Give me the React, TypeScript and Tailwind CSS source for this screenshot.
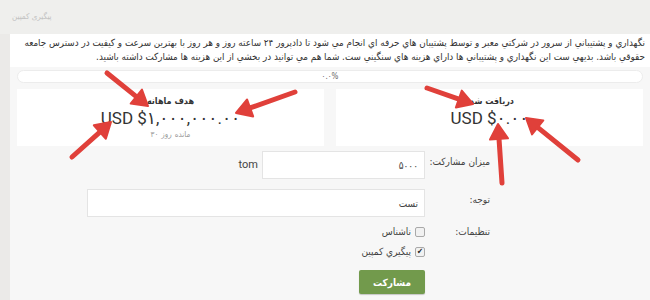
const fa = { fontFamily: '"DejaVu Sans Condensed", "DejaVu Sans", sans-serif' };
const num = { fontFamily: 'Roboto, "DejaVu Sans", sans-serif' };

type Arrow = [number, number, number, number];

const ARROWS: Arrow[] = [
  [107, 73, 148, 106],
  [295, 92, 236, 113],
  [72, 157, 111, 122],
  [427, 88, 473, 104],
  [502, 183, 498, 124],
  [578, 160, 526, 118],
];

function ArrowShape({ a }: { a: Arrow }) {
  const [x1, y1, x2, y2] = a;
  const dx = x2 - x1;
  const dy = y2 - y1;
  const len = Math.hypot(dx, dy);
  const ux = dx / len;
  const uy = dy / len;
  const bx = x2 - ux * 15;
  const by = y2 - uy * 15;
  const nx = -uy * 9;
  const ny = ux * 9;
  return (
    <g>
      <line x1={x1} y1={y1} x2={bx} y2={by} stroke="#e0403a" strokeWidth={5} strokeLinecap="round" />
      <polygon points={`${x2},${y2} ${bx + nx},${by + ny} ${bx - nx},${by - ny}`} fill="#e0403a" strokeLinejoin="round" stroke="#e0403a" strokeWidth={2} />
    </g>
  );
}

function Check({ checked }: { checked?: boolean }) {
  return (
    <span className="flex h-[10px] w-[10px] items-center justify-center rounded-[2px] border border-[#a9a9a9] bg-[#f1f1f1] text-[8px] leading-none text-[#222]">
      {checked ? '✔' : ''}
    </span>
  );
}

export default function App() {
  return (
    <div className="relative h-[300px] w-[650px] overflow-hidden bg-[#efefed]">
      <div className="h-[34px] pl-[12px] pt-[11px] text-[8px] text-[#c2c2c2]" style={fa}>
        پیگیری کمپین
      </div>
      <div className="flex h-[266px]">
        <div className="w-[10px] shrink-0 bg-[#ebeae8]" />
        <div className="min-w-0 flex-1 overflow-hidden bg-[#f7f7f7]">
          <p dir="rtl" className="whitespace-nowrap bg-white pb-[3px] pr-[5px] pt-[2px] text-[9.8px] leading-[14px] text-[#333]" style={fa}>
            نگهداري و پشتيباني از سرور در شرکتي معبر و توسط پشتيبان هاي حرفه اي انجام مي شود تا دادپرور ۲۴ ساعته روز و هر روز با بهترين سرعت و کيفيت در دسترس جامعه
            <br />
            حقوقي باشد. بديهي ست اين نگهداري و پشتيباني ها داراي هزينه هاي سنگيني ست. شما هم مي توانيد در بخشي از اين هزينه ها مشارکت داشته باشيد.
          </p>
          <div className="mx-[7px] mt-[3px] flex h-[13px] items-center justify-center rounded-full border border-[#ececec] bg-white text-[8px] text-[#666]" style={fa}>
            ۰.۰%
          </div>
          <div className="mx-[7px] mt-[6px] flex gap-[12px]">
            <div className="flex h-[57px] flex-1 flex-col items-center justify-center bg-white">
              <div className="text-[9px] font-bold leading-[12px] text-[#333]" style={fa}>هدف ماهانه</div>
              <div dir="ltr" className="text-[17px] leading-[22px] text-[#333]" style={num}>USD $۱,۰۰۰,۰۰۰.۰۰</div>
              <div dir="ltr" className="flex gap-[3px] text-[8px] leading-[11px] text-[#999]" style={fa}>
                <span>۳۰</span>
                <span>روز</span>
                <span>مانده</span>
              </div>
            </div>
            <div className="flex h-[57px] flex-1 flex-col items-center justify-center bg-white">
              <div className="text-[9px] font-bold leading-[12px] text-[#333]" style={fa}>دریافت شده</div>
              <div dir="ltr" className="text-[17px] leading-[22px] text-[#333]" style={num}>USD $۰.۰۰</div>
              <div className="h-[11px]" />
            </div>
          </div>

          <div dir="rtl" className="mt-[5px] flex flex-col pr-[160px] text-[10px] text-[#444]" style={fa}>
            <div className="flex items-start gap-[5px]">
              <div className="w-[60px] whitespace-nowrap pt-[3px]">میزان مشارکت:</div>
              <div className="flex h-[28px] w-[163px] items-center border border-[#e4e4e4] bg-white px-[6px]">۵۰۰۰</div>
              <div className="mr-[-1px] self-center text-[11px]" style={num}>tom</div>
            </div>
            <div className="mt-[10px] flex items-start gap-[5px]">
              <div className="w-[60px] pt-[3px]">توجه:</div>
              <div className="flex h-[28px] w-[338px] items-center border border-[#e4e4e4] bg-white px-[6px]">تست</div>
            </div>
            <div className="mt-[8px] flex items-start gap-[5px]">
              <div className="w-[60px] leading-[13px]">تنظیمات:</div>
              <div className="flex flex-col">
                <div className="flex h-[13px] items-center gap-[4px]">
                  <Check />
                  <span>ناشناس</span>
                </div>
                <div className="mt-[7px] flex h-[13px] items-center gap-[4px]">
                  <Check checked />
                  <span>پیگيري کمپين</span>
                </div>
                <button className="mt-[12px] h-[24px] w-[66px] rounded-[2px] bg-[#729a4c] text-[10px] font-bold text-white shadow-[0_1px_1px_rgba(0,0,0,0.2)]">
                  مشارکت
                </button>
              </div>
            </div>
          </div>
        </div>
      </div>
      <svg className="pointer-events-none absolute inset-0" width={650} height={300}>
        {ARROWS.map((a, i) => (
          <ArrowShape key={i} a={a} />
        ))}
      </svg>
    </div>
  );
}
